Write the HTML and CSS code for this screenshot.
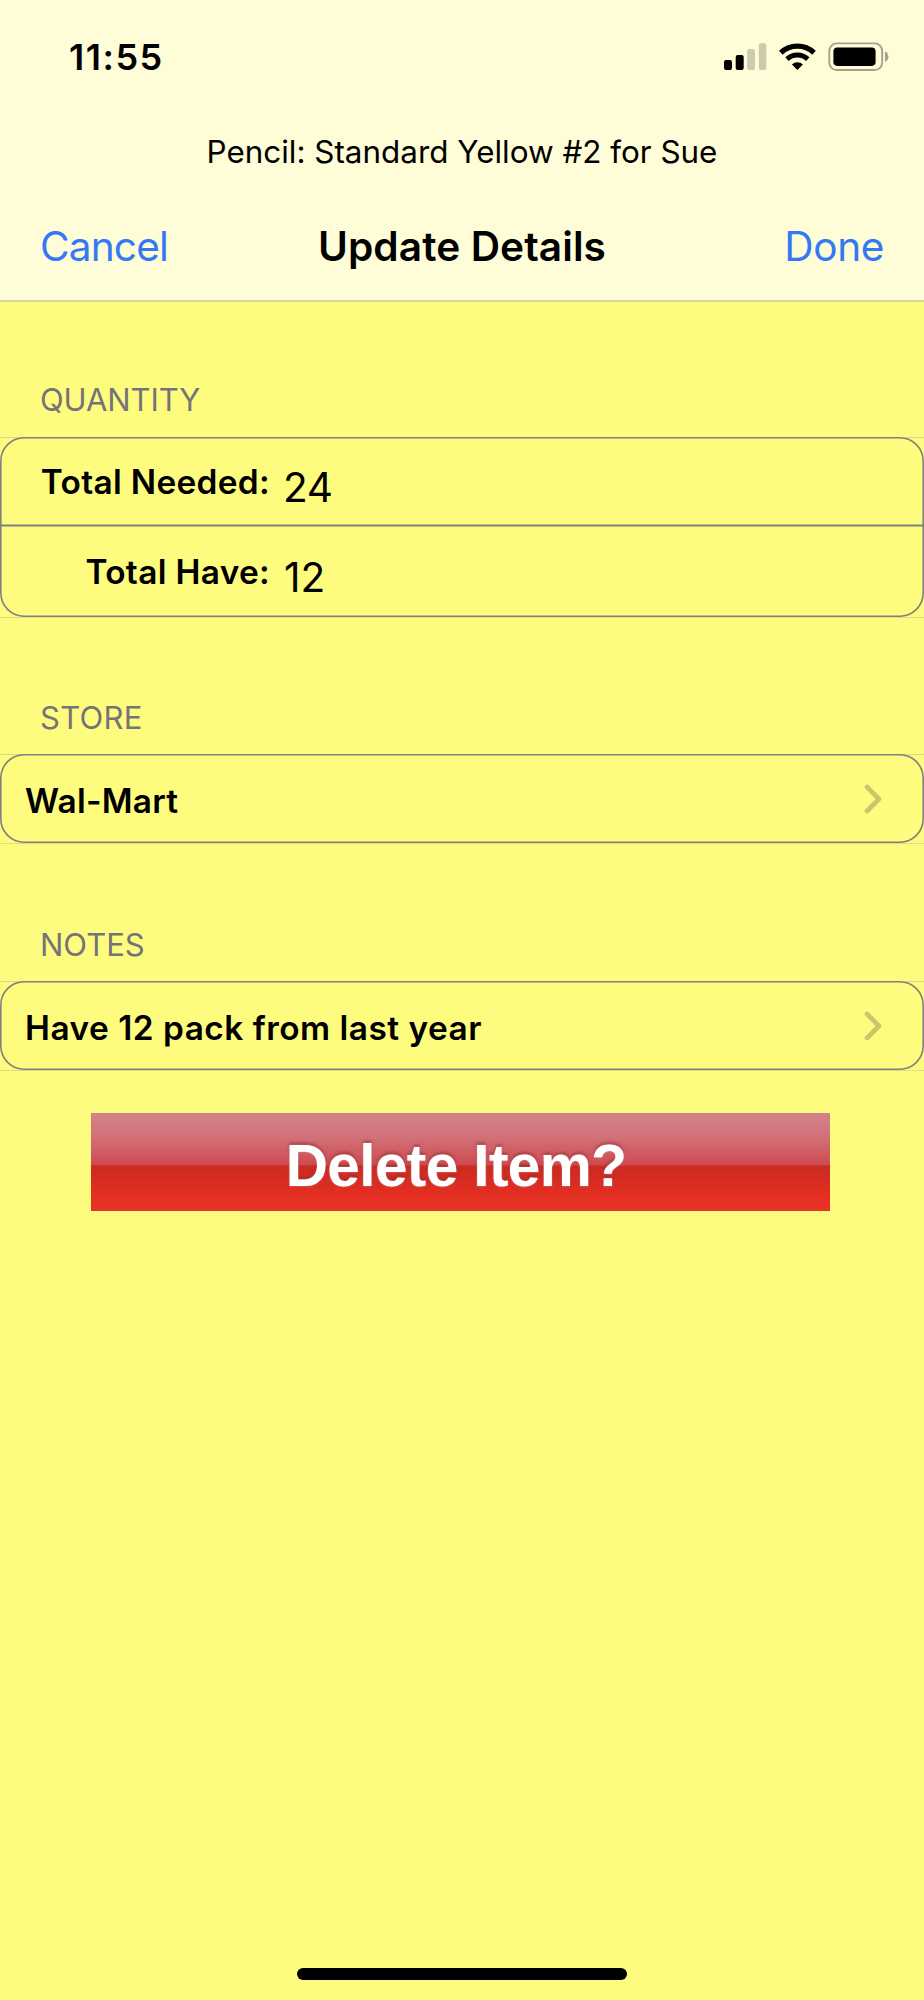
FILE: index.html
```html
<!DOCTYPE html>
<html lang="en">
<head>
<meta charset="utf-8">
<title>Update Details</title>
<link rel="stylesheet" href="styles.css">
</head>
<body>
<div class="screen">
  <header class="header">
    <div class="status">
      <span class="time">11:55</span>
      <svg class="status-icons" width="166" height="30" viewBox="723 42 166 30">
        <rect x="724" y="60" width="8" height="10" rx="2"/>
        <rect x="735.7" y="55" width="8" height="15" rx="2"/>
        <g fill="#cccbae"><rect x="747.2" y="49" width="7.8" height="21" rx="2"/><rect x="758.8" y="43.3" width="7.5" height="26.7" rx="2"/></g>
        <g fill="none" stroke="#000"><path d="M780.8 52.8A24.2 24.2 0 0 1 814 52.8" stroke-width="5.3"/><path d="M787 59.2A15.3 15.3 0 0 1 807.8 59.2" stroke-width="5"/></g>
        <path d="M791.9 64.4A8 8 0 0 1 802.9 64.4L797.4 70Z"/>
        <rect x="829.3" y="43.4" width="52.9" height="26.6" rx="7.5" fill="none" stroke="#a3a28a" stroke-width="1.9"/>
        <rect x="833.4" y="47.5" width="42.2" height="18.4" rx="3.8"/>
        <path d="M885 51.5C889.6 53.2 889.6 60.4 885 62Z" fill="#a3a28a"/>
      </svg>
    </div>
    <div class="subtitle"><span>Pencil: Standard Yellow #2 for Sue</span></div>
    <nav class="nav"><a class="cancel">Cancel</a><h1 class="title">Update Details</h1><a class="done">Done</a></nav>
  </header>
  <main>
    <section class="section quantity">
      <h2 class="heading">QUANTITY</h2>
      <div class="group">
        <div class="row row-first"><span class="label">Total Needed:</span><span class="value needed">24</span></div>
        <div class="row row-last"><span class="label">Total Have:</span><span class="value">12</span></div>
      </div>
    </section>
    <section class="section store">
      <h2 class="heading">STORE</h2>
      <div class="group"><div class="row row-link"><span class="store-name">Wal-Mart</span><svg class="chevron" width="18" height="30" viewBox="0 0 18 30"><path d="M3 3L15 15L3 27"/></svg></div></div>
    </section>
    <section class="section notes">
      <h2 class="heading">NOTES</h2>
      <div class="group"><div class="row row-link"><span class="note">Have 12 pack from last year</span><svg class="chevron" width="18" height="30" viewBox="0 0 18 30"><path d="M3 3L15 15L3 27"/></svg></div></div>
    </section>
    <button class="delete">Delete Item?</button>
  </main>
  <div class="home"></div>
</div>
</body>
</html>
```
FILE: styles.css
```css
* { box-sizing: border-box; }
body { margin: 0; font-family: Inter, "Liberation Sans", sans-serif; color: #000; background: #fefc7f; }
h1, h2 { margin: 0; font-weight: inherit; font-size: inherit; }
.screen { width: 924px; height: 2000px; display: flex; flex-direction: column; overflow: hidden; }
main { flex: 1; display: flex; flex-direction: column; }
.header { height: 302px; background: #fefdd8; border-bottom: 2px solid #d8d7a4; }
.status { height: 114px; padding: 0 35px 0 69px; display: flex; align-items: center; justify-content: space-between; }
.time { font-size: 36px; font-weight: 600; line-height: 44px; letter-spacing: 1.5px; }
.status-icons { display: block; }
.subtitle { height: 74px; padding-top: 1px; display: flex; align-items: center; justify-content: center; font-size: 31.4px; }
.nav { height: 112px; padding: 5px 40px 0 40px; display: grid; grid-template-columns: 1fr auto 1fr; align-items: center; font-size: 40.6px; }
.cancel, .done { color: #3478f6; }
.cancel { letter-spacing: -0.85px; }
.done { justify-self: end; letter-spacing: -0.4px; }
.title { font-weight: 600; letter-spacing: 0.1px; }
.heading { display: flex; align-items: flex-end; padding: 0 40px 17px; font-size: 31px; line-height: 40px; color: #747478; }
.quantity .heading { height: 135px; letter-spacing: -0.1px; }
.store .heading { height: 136px; padding-bottom: 16px; letter-spacing: 0.3px; }
.notes .heading { height: 137px; padding-bottom: 16px; }
.group { background: linear-gradient(#dcdb80, #dcdb80) top / 100% 1px no-repeat, linear-gradient(#e0df7c, #e0df7c) bottom / 100% 1px no-repeat; padding-bottom: 1px; }
.row { display: flex; align-items: center; box-shadow: inset 0 0 0 1.6px #808080; font-size: 33.4px; font-weight: 600; }
.row-first { height: 89px; border-radius: 24px 24px 0 0; }
.row-last { height: 92px; margin-top: -1px; padding-top: 2px; border-radius: 0 0 24px 24px; }
.row-link { height: 89px; border-radius: 24px; padding: 5px 42px 0 25px; justify-content: space-between; }
.label { width: 270px; text-align: right; letter-spacing: 0.33px; }
.value { font-size: 40.6px; font-weight: 400; padding: 11px 0 0 14px; }
.needed { padding-left: 13px; letter-spacing: -0.3px; }
.store-name { letter-spacing: 0.25px; }
.note { letter-spacing: 0.5px; }
.chevron { fill: none; stroke: #c9c76c; stroke-width: 4.6; stroke-linecap: round; stroke-linejoin: round; margin-top: -5px; }
.delete { width: 739px; height: 98px; margin: 42px 0 0 91px; padding: 6px 9px 0 0; border: 0; background: linear-gradient(#d4828b 0, #d27078 25%, #cf4a50 53%, #cb2a22 54%, #e52f22 86%, #e83325 100%); color: #fff; font: bold 58.5px "Liberation Sans", Arial, sans-serif; letter-spacing: -0.6px; text-shadow: 0 0 2px #ffffff80, 0 -2px 3px #7a2020a0; }
.home { flex: none; width: 330px; height: 12px; margin: 0 auto 20px; border-radius: 6px; background: #000; }
```
